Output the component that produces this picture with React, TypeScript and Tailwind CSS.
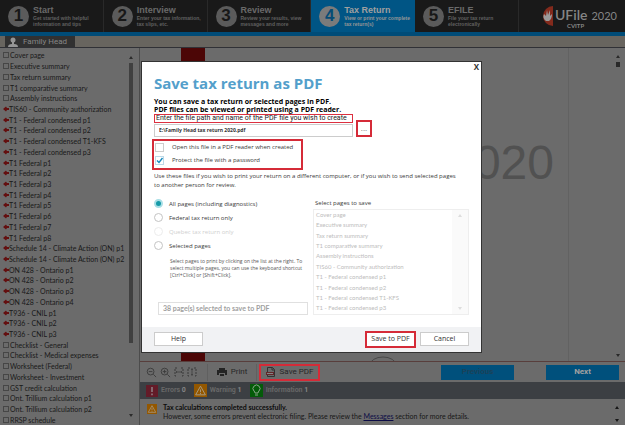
import React from 'react';

const steps = [
  { n: 1, title: 'Start', lines: ['Get started with helpful', 'information and tips'] },
  { n: 2, title: 'Interview', lines: ['Enter your tax information,', 'tax slips, etc.'] },
  { n: 3, title: 'Review', lines: ['Review your results, view', 'messages and more'] },
  { n: 4, title: 'Tax Return', lines: ['View or print your complete', 'tax return(s)'] },
  { n: 5, title: 'EFILE', lines: ['File your tax return', 'electronically'] },
];

const pages: { name: string; flagged?: boolean }[] = [
  { name: 'Cover page' },
  { name: 'Executive summary' },
  { name: 'Tax return summary' },
  { name: 'T1 comparative summary' },
  { name: 'Assembly instructions' },
  { name: 'TIS60 - Community authorization', flagged: true },
  { name: 'T1 - Federal condensed p1', flagged: true },
  { name: 'T1 - Federal condensed p2', flagged: true },
  { name: 'T1 - Federal condensed T1-KFS', flagged: true },
  { name: 'T1 - Federal condensed p3', flagged: true },
  { name: 'T1 Federal p1', flagged: true },
  { name: 'T1 Federal p2', flagged: true },
  { name: 'T1 Federal p3', flagged: true },
  { name: 'T1 Federal p4', flagged: true },
  { name: 'T1 Federal p5', flagged: true },
  { name: 'T1 Federal p6', flagged: true },
  { name: 'T1 Federal p7', flagged: true },
  { name: 'T1 Federal p8', flagged: true },
  { name: 'Schedule 14 - Climate Action (ON) p1', flagged: true },
  { name: 'Schedule 14 - Climate Action (ON) p2', flagged: true },
  { name: 'ON 428 - Ontario p1', flagged: true },
  { name: 'ON 428 - Ontario p2', flagged: true },
  { name: 'ON 428 - Ontario p3', flagged: true },
  { name: 'ON 428 - Ontario p4', flagged: true },
  { name: 'T936 - CNIL p1', flagged: true },
  { name: 'T936 - CNIL p2', flagged: true },
  { name: 'T936 - CNIL p3', flagged: true },
  { name: 'Checklist - General' },
  { name: 'Checklist - Medical expenses' },
  { name: 'Worksheet (Federal)' },
  { name: 'Worksheet - Investment' },
  { name: 'GST credit calculation' },
  { name: 'Ont. Trillium calculation p1' },
  { name: 'Ont. Trillium calculation p2' },
  { name: 'RRSP schedule' },
];

function Triangle({ down = false, className = '' }: { down?: boolean; className?: string }) {
  return (
    <svg viewBox="0 0 4 3" className={`h-[3px] w-1 ${className}`} fill="currentColor" aria-hidden="true">
      <path d={down ? 'M0 0h4L2 3z' : 'M0 3h4L2 0z'} />
    </svg>
  );
}

function Header() {
  return (
    <header className="flex h-9 shrink-0 border-b-4 border-[#004c78] bg-[#191919] font-['Liberation_Sans',sans-serif]">
      <nav className="grid w-[83%] grid-cols-5">
        {steps.map((s) => (
          <a
            key={s.n}
            href={`#step-${s.n}`}
            className={`flex min-w-0 items-center gap-1 border-r pl-2 ${
              s.n === 4 ? 'border-[#005585] bg-[#005585] text-[#969696]' : 'border-[#292929] text-[#606060]'
            }`}
          >
            <span
              className={`flex size-[21px] shrink-0 items-center justify-center rounded-full text-[17px] font-bold ${
                s.n === 4 ? 'bg-[#7b7b7b] text-[#064c76]' : 'bg-[#5b5b5b] text-[#181818]'
              }`}
            >
              {s.n}
            </span>
            <span className="whitespace-nowrap pb-px text-[5px] font-bold leading-[6px]">
              <span className={`block text-[9px] leading-[10px] ${s.n === 4 ? 'text-[#a0a0a0]' : 'text-[#696969]'}`}>{s.title}</span>
              <span className="block">{s.lines[0]}</span>
              <span className="block">{s.lines[1]}</span>
            </span>
          </a>
        ))}
      </nav>
      <div className="flex flex-1 items-center justify-end gap-px pr-2">
        <svg viewBox="0 0 16 20" className="h-5 w-4 shrink-0" aria-hidden="true">
          <path d="M15 0A10 10 0 0 0 15 20z" fill="#832a1c" />
          <path d="M8 15Q4 12 6 8l2 2 1-6 1 5 2-5v6l2-2q0 5-3 7z" fill="#9b9b9b" />
        </svg>
        <div className="pt-1 font-['Lato',sans-serif] text-[#858585]">
          <div className="flex items-baseline gap-1 leading-[14px]">
            <span className="text-[14px] font-semibold">UFile</span>
            <span className="text-[11px]">2020</span>
          </div>
          <div className="pl-3 text-[6px] font-bold leading-[6px]">CVITP</div>
        </div>
      </div>
    </header>
  );
}

function Sidebar() {
  return (
    <aside className="flex w-[140px] shrink-0 border-r border-[#4c4c4c] font-['Lato',sans-serif] text-[#191919]">
      <ul className="flex min-w-0 flex-1 flex-col pt-[2px] pl-[3px]">
        {pages.map((p) => (
          <li key={p.name} className="flex min-h-0 flex-1 items-center whitespace-nowrap text-[7px] leading-[10px]">
            {p.flagged ? (
              <a href="#page" className="flex items-center">
                <svg viewBox="0 0 6 6" className="size-[6px]" fill="#640f0f" aria-hidden="true">
                  <path d="M0 3L3 .5L4 2h2v2H4L3 5.500z" />
                </svg>
                {p.name}
              </a>
            ) : (
              <label className="flex items-center gap-px">
                <input type="checkbox" className="size-[6px] appearance-none border border-[#464646]" />
                {p.name}
              </label>
            )}
          </li>
        ))}
      </ul>
      <div className="flex w-4 flex-col items-center py-2 text-[#2c2c2c]">
        <Triangle />
        <div className="mt-1 w-1 flex-[131] bg-[#404040]" />
        <div className="flex-[33]" />
        <Triangle down />
      </div>
    </aside>
  );
}

function Preview() {
  return (
    <section className="flex min-h-0 flex-1 overflow-hidden border-b border-[#583e3c]">
      <div className="flex min-w-0 flex-1 border-r border-[#626262] pl-[41px] pr-[14px]">
        <div className="mr-auto w-6 bg-[#4c0606]" />
        <svg viewBox="0 0 24 24" className="mt-auto mr-[52px] -mb-4 size-6" fill="none" stroke="#484848" aria-hidden="true">
          <ellipse cx="12" cy="12" rx="13" ry="8" />
        </svg>
        <div className="pt-[87px] font-['Liberation_Sans',sans-serif] text-[48px] leading-[56px] text-[#515151]">2020</div>
      </div>
      <div className="flex w-14 flex-col items-end gap-1 pt-[7px] pr-[5px] text-[#292929]">
        <Triangle />
        <div className="h-[5px] w-1 bg-[#292929]" />
        <Triangle down className="mt-auto mb-1" />
      </div>
    </section>
  );
}

function ZoomIcon({ plus = false }: { plus?: boolean }) {
  return (
    <svg viewBox="0 0 12 12" className="size-[11px]" fill="none" stroke="currentColor" aria-hidden="true">
      <circle cx="5" cy="5" r="3.7" />
      <path d={plus ? 'M8 8l3 3M3 5h4M5 3v4' : 'M8 8l3 3M3 5h4'} />
    </svg>
  );
}

function FitIcon({ tall = false }: { tall?: boolean }) {
  return (
    <svg viewBox="0 0 10 10" className="size-[10px]" fill="none" stroke="currentColor" aria-hidden="true">
      <path d="M3 1H1v8h2M7 1h2v8H7" strokeDasharray="2 1" />
      <path d={tall ? 'M5 1v8M4 3l1-1 1 1M4 7l1 1 1-1' : 'M2 5h6M3 4L2 5l1 1M7 4l1 1-1 1'} strokeWidth=".7" />
    </svg>
  );
}

function Toolbar() {
  return (
    <div className="flex h-5 shrink-0 items-center pl-[6px] pr-[6px] text-[#272727]">
      <div className="flex items-center gap-[3px] text-[#3b3b3b]">
        <button aria-label="Zoom out"><ZoomIcon /></button>
        <button aria-label="Zoom in"><ZoomIcon plus /></button>
        <button aria-label="Fit width"><FitIcon /></button>
        <button aria-label="Fit page"><FitIcon tall /></button>
      </div>
      <button className="ml-[10px] flex h-[17px] w-[50px] items-center justify-center gap-1 border-x border-[#606060] text-[8px]">
        <svg viewBox="0 0 10 10" className="size-[10px]" aria-hidden="true">
          <path d="M2 1h6v2H2zM0 3h10v5H8V6H2v2H0zM3 7h4v2H3z" fill="#242424" />
        </svg>
        Print
      </button>
      <button className="ml-[2px] flex h-[17px] w-[61px] items-center justify-center gap-1 border-2 border-[#d52b38] text-[8px]">
        <svg viewBox="0 0 10 10" className="size-[10px]" fill="none" stroke="#333" aria-hidden="true">
          <path d="M1.5 9.5v-9h5l2 2v7zM6 .5V3h2" />
          <path d="M0 5h8v3H0z" fill="#64262a" stroke="none" />
          <path d="M1 6.5h6" stroke="#858585" />
        </svg>
        Save PDF
      </button>
      <div className="ml-auto flex gap-8 text-[8px] font-bold">
        <button disabled className="h-[15px] w-[73px] bg-[#00507c] text-[#1b4259]">Previous</button>
        <button className="h-[15px] w-[73px] bg-[#00507c] text-[#a0a0a0]">Next</button>
      </div>
    </div>
  );
}

function WarningIcon() {
  return (
    <svg viewBox="0 0 12 12" className="size-full" fill="none" aria-hidden="true">
      <path d="M0 0h12v12H0z" fill="#935700" />
      <path d="M6 2l4.500 8h-9zM6 5v2.500M6 8.200v1" stroke="#a69a83" strokeWidth=".9" />
    </svg>
  );
}

function StatusBar() {
  return (
    <div className="flex h-[17px] shrink-0 items-center gap-2 bg-[#3c3f43] pl-[6px] text-[7px] font-bold text-[#686868]">
      <span className="flex items-center gap-[3px]">
        <svg viewBox="0 0 12 12" className="size-3" aria-hidden="true">
          <path d="M0 0h12v12H0z" fill="#631b28" />
          <path d="M6 2v5M6 8.500v1.700" stroke="#8f8185" strokeWidth="1.500" />
        </svg>
        <span>Errors <span className="text-[#858585]">0</span></span>
      </span>
      <span className="flex items-center gap-[3px]">
        <span className="size-[13px]"><WarningIcon /></span>
        <span>Warning <span className="text-[#858585]">1</span></span>
      </span>
      <span className="flex items-center gap-[3px]">
        <svg viewBox="0 0 13 13" className="size-[13px]" fill="none" stroke="#8ba58b" aria-hidden="true">
          <path d="M0 0h13v13H0z" fill="#045b09" stroke="none" />
          <path d="M5 9Q5 8 4 7a3.500 3.500 0 1 1 5 0Q8 8 8 9zM5 11h3" />
        </svg>
        <span>Information <span className="text-[#858585]">1</span></span>
      </span>
    </div>
  );
}

function Messages() {
  return (
    <div className="flex h-[26px] shrink-0 gap-[6px] pt-1 pl-[7px] pr-[6px] font-['Lato',sans-serif] text-[7px] leading-[9px] text-[#171717]">
      <span className="mt-px size-[10px] shrink-0"><WarningIcon /></span>
      <div className="min-w-0 flex-1 whitespace-nowrap">
        <p className="font-bold text-[#0c0c0c]">Tax calculations completed successfully.</p>
        <p>
          However, some errors prevent electronic filing. Please review the{' '}
          <a href="#messages" className="text-[#0c0c46] underline">Messages</a> section for more details.
        </p>
      </div>
      <div className="flex flex-col justify-between py-[3px]">
        <Triangle />
        <Triangle down />
      </div>
    </div>
  );
}

function Radio({ label, checked, disabled }: { label: string; checked?: boolean; disabled?: boolean }) {
  return (
    <label className={`flex items-center gap-[6px] leading-[14px] ${disabled ? 'text-[#cfcfcf]' : 'text-[#3a3a3a]'}`}>
      <input
        type="radio"
        name="scope"
        defaultChecked={checked}
        disabled={disabled}
        className="size-[9px] shrink-0 appearance-none rounded-full border border-[#c4c4c4] bg-white checked:border-2 checked:border-[#a9dfe6] checked:bg-[#159aa8] disabled:border-[#ececec]"
      />
      {label}
    </label>
  );
}

function SaveDialog() {
  return (
    <div className="fixed inset-0 flex items-center justify-center pb-3 pr-[2px]">
      <div
        role="dialog"
        aria-labelledby="dialog-title"
        className="flex h-[292px] w-[341px] flex-col border border-[#333] bg-white font-['Open_Sans',sans-serif] text-[6px] text-[#3a3a3a]"
      >
        <div className="flex-1 pl-3 pr-3">
          <div className="-mr-3 flex h-[11px] justify-end pr-[2px]">
            <button aria-label="Close" className="text-[8px] font-bold leading-[10px] text-[#333]">X</button>
          </div>
          <h1 id="dialog-title" className="text-[15px] font-bold leading-5 text-[#539fcb]">
            Save tax return as PDF
          </h1>
          <p className="mt-[5px] whitespace-nowrap text-[7px] font-bold leading-[8px] text-black">
            You can save a tax return or selected pages in PDF.
            <br />
            PDF files can be viewed or printed using a PDF reader.
          </p>
          <div className="flex items-end gap-[3px]">
            <div className="w-[199px]">
              <label
                htmlFor="path"
                className="flex h-[9px] items-center whitespace-nowrap border border-[#dc3040] pl-px font-['Roboto',sans-serif] text-[7px] text-[#222]"
              >
                Enter the file path and name of the PDF file you wish to create
              </label>
              <input
                id="path"
                defaultValue="E:\Family Head tax return 2020.pdf"
                className="mt-px block h-[13px] w-full border border-[#ccc] pl-1 pb-px text-[5px] font-bold text-[#333]"
              />
            </div>
            <button aria-label="Browse" className="h-[17px] w-4 border-2 border-[#d52b38] text-[8px] leading-[12px] text-[#777]">
              ...
            </button>
          </div>
          <div className="mt-[2px] -ml-[2px] flex h-[31px] w-[151px] flex-col justify-around whitespace-nowrap border-2 border-[#d52b38] pl-px">
            <label className="flex items-center gap-2">
              <input type="checkbox" className="size-[9px] shrink-0 appearance-none border border-[#ccc]" />
              Open this file in a PDF reader when created
            </label>
            <label className="flex items-center gap-2">
              <span className="grid size-[9px] shrink-0">
                <input type="checkbox" defaultChecked className="col-start-1 row-start-1 appearance-none border border-[#bcd9e8]" />
                <svg viewBox="0 0 9 9" className="col-start-1 row-start-1" fill="none" stroke="#1689bd" strokeWidth="1.400" aria-hidden="true">
                  <path d="M2 4.500l2 2L7.500 2" />
                </svg>
              </span>
              Protect the file with a password
            </label>
          </div>
          <p className="mt-[2px] whitespace-nowrap leading-[9px]">
            Use these files if you wish to print your return on a different computer, or if you wish to send selected pages
            <br />
            to another person for review.
          </p>
          <div className="mt-[7px] flex gap-[5px]">
            <div className="flex w-[154px] flex-col">
              <Radio label="All pages (including diagnostics)" checked />
              <Radio label="Federal tax return only" />
              <Radio label="Quebec tax return only" disabled />
              <Radio label="Selected pages" />
              <p className="mt-[5px] whitespace-nowrap pl-4 text-[5px] leading-[7px] text-[#555]">
                Select pages to print by clicking on the list at the right. To
                <br />
                select multiple pages, you can use the keyboard shortcut
                <br />
                [Ctrl+Click] or [Shift+Click].
              </p>
              <p className="mt-auto ml-1 flex h-[13px] items-center border border-[#e0e0e0] pl-1 font-['Lato',sans-serif] text-[7px] font-bold text-[#a0a0a0]">
                38 page(s) selected to save to PDF
              </p>
            </div>
            <div className="min-w-0 flex-1">
              <label htmlFor="pages" className="block h-3 pl-[2px] leading-[12px]">Select pages to save</label>
              <div className="flex h-[106px] border border-[#eee] font-['Lato',sans-serif] text-[#bdbdbd]">
                <ul id="pages" className="flex flex-1 flex-col pl-[2px]">
                  {pages.slice(0, 10).map((p) => (
                    <li key={p.name} className="flex flex-1 items-center whitespace-nowrap leading-[10px]">{p.name}</li>
                  ))}
                </ul>
                <div className="flex w-4 flex-col items-center justify-between bg-[#fafafa] py-1 text-[#ddd]">
                  <Triangle />
                  <Triangle down />
                </div>
              </div>
            </div>
          </div>
        </div>
        <div className="flex h-[25px] shrink-0 items-center bg-[#f1f2f4] px-3 text-[7px] text-[#333]">
          <button className="h-[14px] w-[49px] border border-[#ccc] bg-white">Help</button>
          <button className="ml-auto h-[17px] w-[51px] border-2 border-[#d52b38] bg-white">Save to PDF</button>
          <button className="ml-1 h-[14px] w-[49px] border border-[#ccc] bg-white">Cancel</button>
        </div>
      </div>
    </div>
  );
}

export default function App() {
  return (
    <div className="flex h-screen flex-col overflow-hidden bg-[#6b6b6b] font-['Roboto',sans-serif]">
      <Header />
      <div className="flex h-3 shrink-0 border-b border-[#303136] bg-[#68655f] pl-[5px]">
        <button className="flex w-[70px] items-center gap-[5px] bg-[#313131] pl-[3px] text-[8px] leading-[10px] text-[#868686]">
          <svg viewBox="0 0 10 10" className="size-[10px]" fill="#969696" aria-hidden="true">
            <circle cx="5" cy="3" r="2.500" />
            <path d="M4 5h2v2q4 0 4 3H0q0-3 4-3z" />
          </svg>
          Family Head
        </button>
      </div>
      <div className="flex min-h-0 flex-1">
        <Sidebar />
        <main className="flex min-w-0 flex-1 flex-col">
          <Preview />
          <Toolbar />
          <StatusBar />
          <Messages />
        </main>
      </div>
      <SaveDialog />
    </div>
  );
}
